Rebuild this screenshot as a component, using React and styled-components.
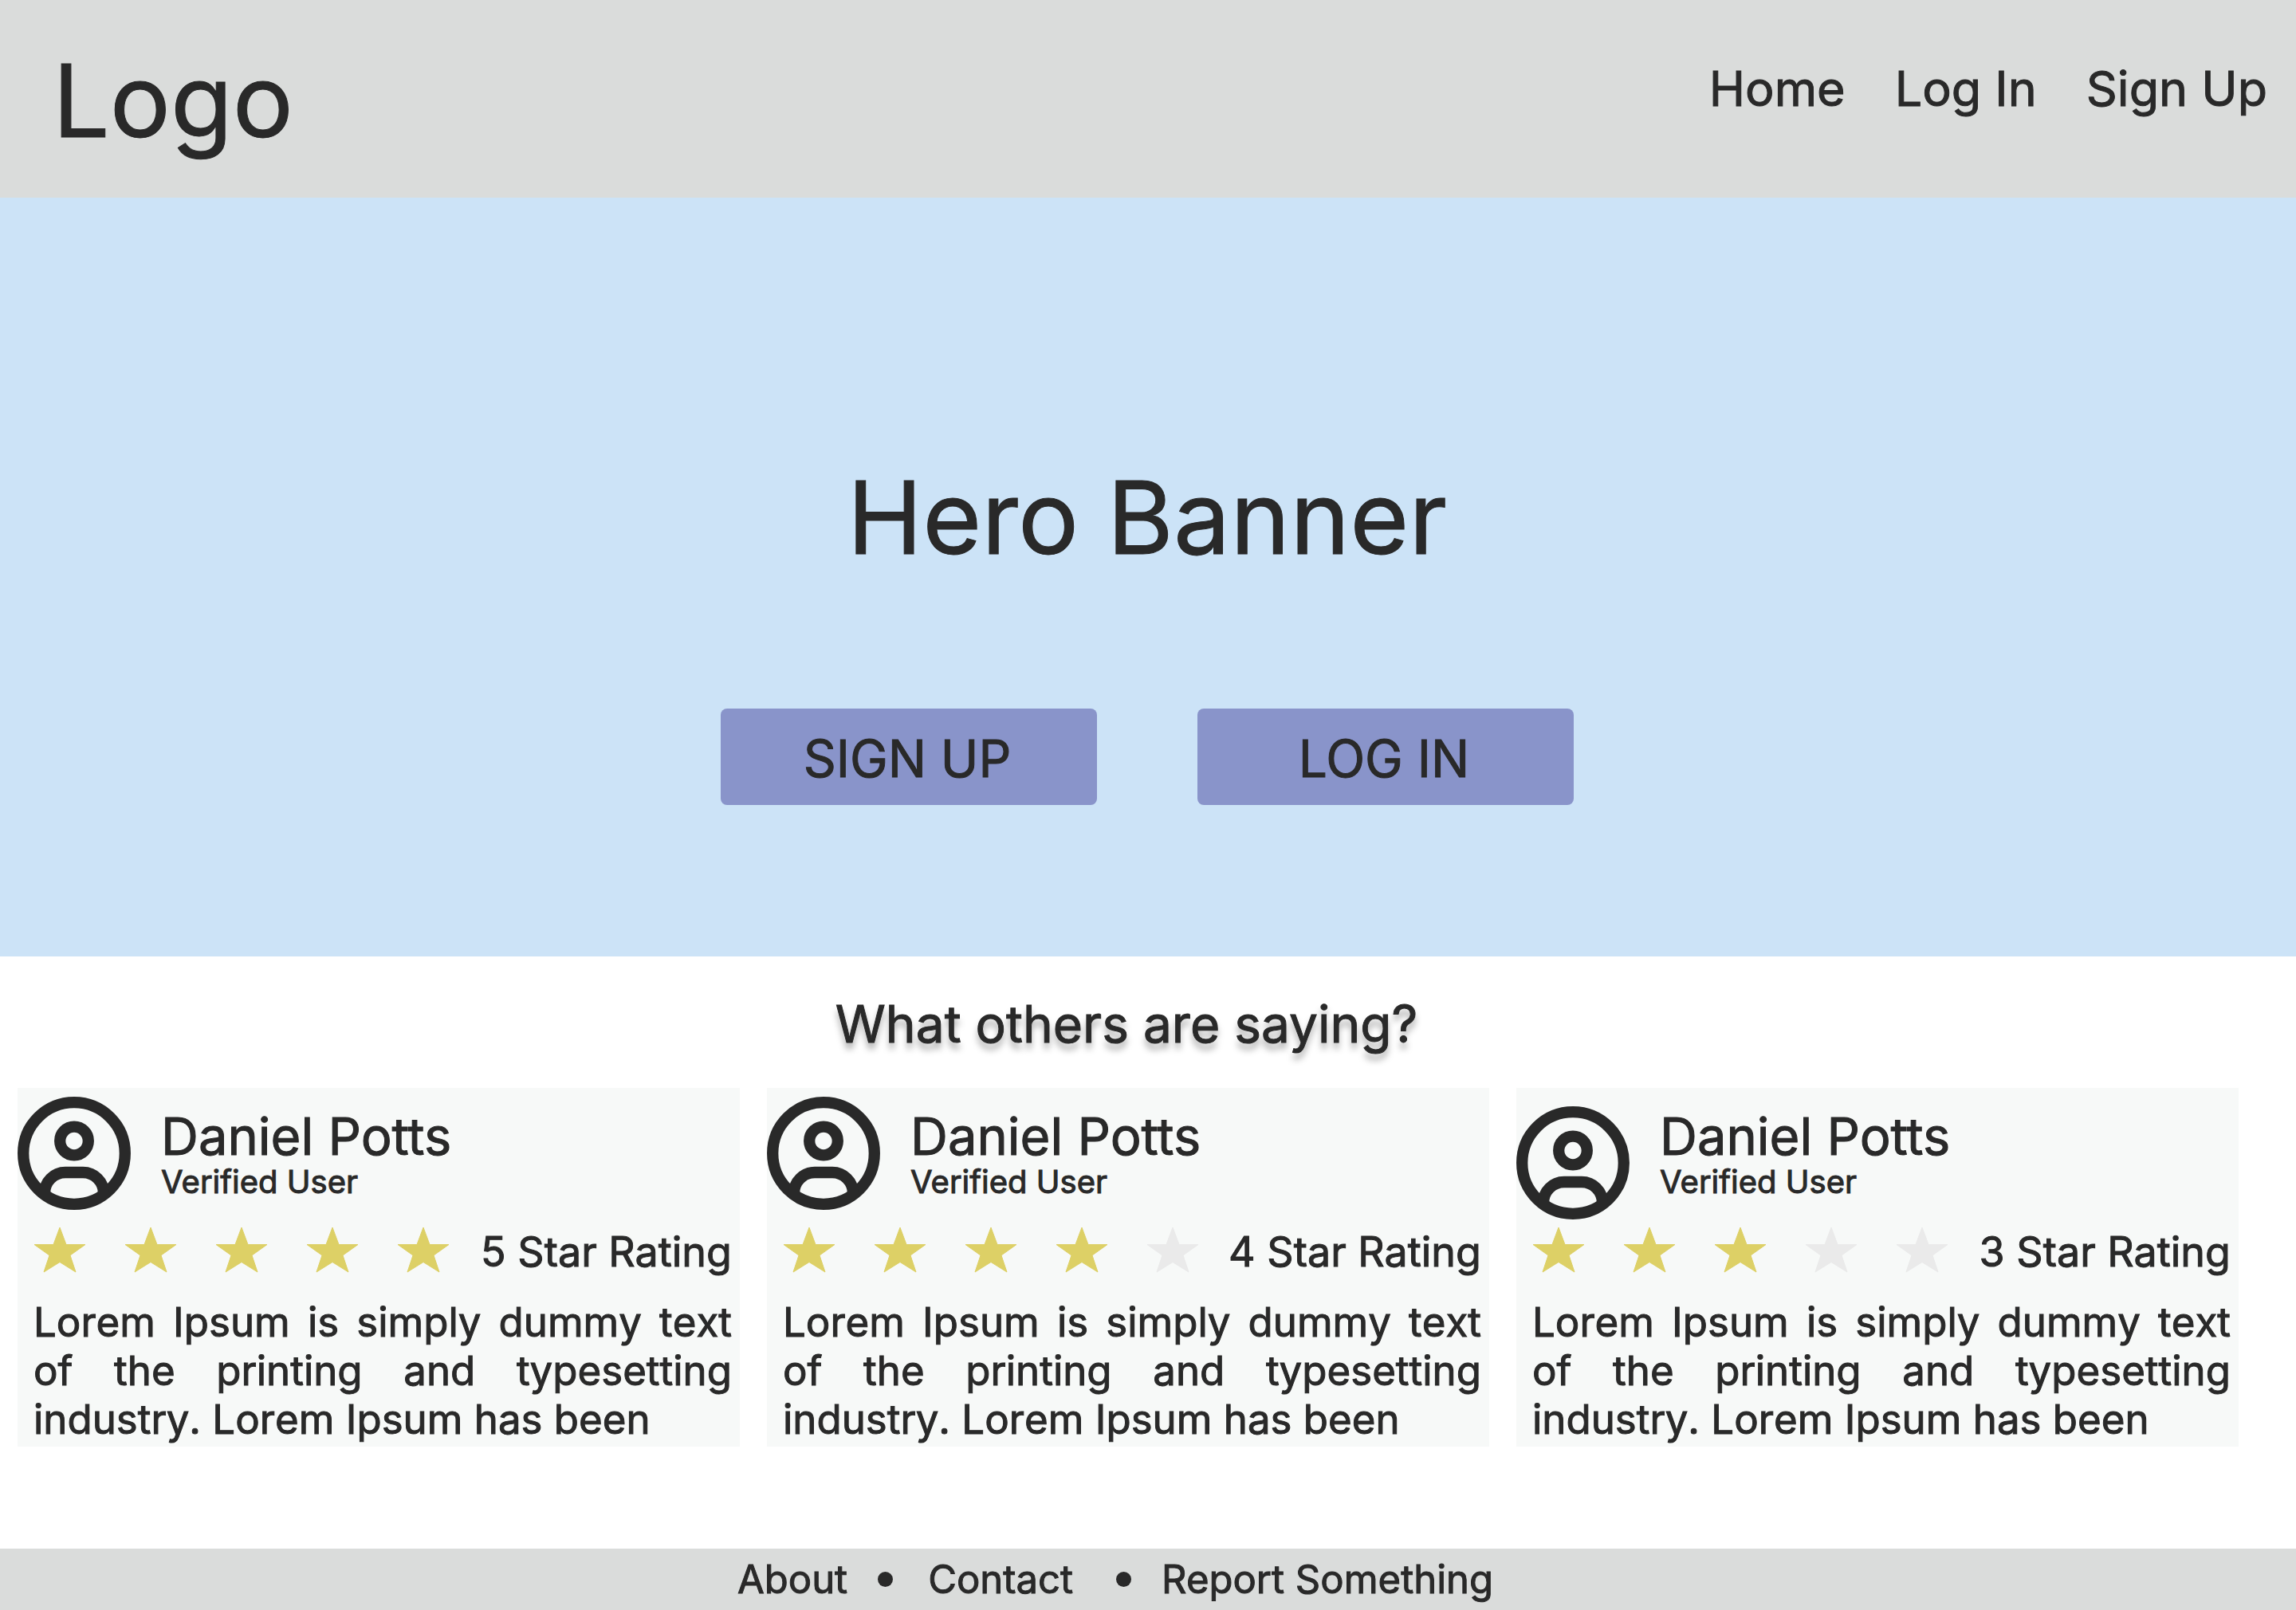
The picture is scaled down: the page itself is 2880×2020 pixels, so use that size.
import React from "react";
import styled, { createGlobalStyle } from "styled-components";

const ink = "#292929";

const GlobalStyle = createGlobalStyle`
  *, *::before, *::after { box-sizing: border-box; }
  body {
    margin: 0;
    background: #ffffff;
    color: ${ink};
    font-family: Inter, "Liberation Sans", sans-serif;
    -webkit-text-stroke: 1px ${ink};
  }
  h1, h2, h3, p { margin: 0; font-weight: 400; }
`;

const Page = styled.div`
  min-height: 100vh;
  display: flex;
  flex-direction: column;
`;

const Header = styled.header`
  display: flex;
  align-items: flex-start;
  justify-content: space-between;
  height: 248px;
  padding: 48px 36px 0 66px;
  background: #dadcdb;
`;

const Logo = styled.a`
  color: inherit;
  text-decoration: none;
  font-size: 127px;
  line-height: 156px;
`;

const Nav = styled.nav`
  display: flex;
  gap: 62px;
  padding-top: 24px;
`;

const NavLink = styled.a`
  color: inherit;
  text-decoration: none;
  font-size: 61px;
  line-height: 78px;
`;

const Hero = styled.section`
  display: flex;
  flex-direction: column;
  align-items: center;
  padding: 323px 2px 190px 0;
  background: #cce3f7;
`;

const HeroTitle = styled.h1`
  font-size: 127px;
  line-height: 156px;
`;

const Actions = styled.div`
  display: flex;
  gap: 126px;
  margin-top: 162px;
`;

const ActionButton = styled.button`
  width: 472px;
  height: 121px;
  padding: 4px 4px 0 0;
  border: 0;
  border-radius: 8px;
  background: #8994ca;
  color: inherit;
  font: inherit;
  font-size: 64px;
  line-height: 78px;
  -webkit-text-stroke: inherit;
`;

const Reviews = styled.section`
  flex: 1;
  padding: 46px 72px 80px 22px;
`;

const ReviewsTitle = styled.h2`
  padding-right: 4px;
  text-align: center;
  font-size: 64px;
  line-height: 78px;
  text-shadow: 0 8px 8px rgba(0, 0, 0, 0.35);
`;

const Cards = styled.div`
  display: grid;
  grid-template-columns: repeat(3, 1fr);
  gap: 34px;
  margin-top: 41px;
`;

const Card = styled.article`
  height: 450px;
  background: #f7f9f8;
`;

const Person = styled.div`
  display: flex;
  height: 175px;
`;

const Avatar = styled.svg`
  width: 142px;
  height: 142px;
  margin-top: ${(p) => (p.$low ? 23 : 11)}px;
`;

const Identity = styled.div`
  padding: 22px 0 0 38px;
`;

const Name = styled.h3`
  font-size: 65px;
  line-height: 78px;
`;

const Status = styled.p`
  font-size: 40px;
  line-height: 36px;
`;

const Rating = styled.div`
  display: flex;
  align-items: flex-start;
  justify-content: space-between;
  height: 60px;
  padding: 0 10px 0 21px;
`;

const Stars = styled.div`
  display: flex;
  gap: 50px;
`;

const Star = styled.svg`
  width: 64px;
  height: 56px;
  overflow: visible;
  fill: ${(p) => (p.$on ? "#ddd066" : "#eaeaea")};
  stroke: ${(p) => (p.$on ? "#ddd066" : "#eaeaea")};
`;

const Score = styled.span`
  font-size: 52px;
  line-height: 62px;
`;

const Quote = styled.p`
  padding: 28px 10px 0 20px;
  font-size: 51px;
  line-height: 61px;
  text-align: justify;
  font-kerning: none;
`;

const Footer = styled.footer`
  display: flex;
  justify-content: center;
  align-items: center;
  gap: 38px;
  height: 77px;
  padding-right: 82px;
  background: #dadcdb;
`;

const FooterLink = styled.a`
  padding: ${(p) => (p.$spaced ? "0 16px 0 6px" : 0)};
  color: inherit;
  text-decoration: none;
  font-size: 49px;
  line-height: 58px;
`;

const Dot = styled.span`
  width: 19px;
  height: 19px;
  border-radius: 50%;
  background: ${ink};
`;

const reviews = [
  { id: 1, stars: 5 },
  { id: 2, stars: 4 },
  { id: 3, stars: 3, low: true },
];

function UserIcon({ low }) {
  return (
    <Avatar $low={low} viewBox="0 0 142 142" fill="none" stroke={ink} strokeWidth="14.3" aria-hidden="true">
      <circle cx="71" cy="71" r="63.8" />
      <circle cx="71" cy="55.5" r="17.8" />
      <path d="M34 121A26 26 0 0 1 60 95H82A26 26 0 0 1 108 121" />
    </Avatar>
  );
}

function Review({ stars, low }) {
  return (
    <Card>
      <Person>
        <UserIcon low={low} />
        <Identity>
          <Name>Daniel Potts</Name>
          <Status>Verified User</Status>
        </Identity>
      </Person>
      <Rating>
        <Stars>
          {[1, 2, 3, 4, 5].map((n) => (
            <Star key={n} $on={n <= stars} viewBox="0 0 64 56" aria-hidden="true">
              <path d="M32 0L40 21.5H64L45 35L52 56L32 43.5L12 56L19 35L0 21.5H24Z" />
            </Star>
          ))}
        </Stars>
        <Score>{stars} Star Rating</Score>
      </Rating>
      <Quote>
        Lorem Ipsum is simply dummy text of the printing and typesetting industry. Lorem Ipsum has been
      </Quote>
    </Card>
  );
}

export default function App() {
  return (
    <Page>
      <GlobalStyle />
      <Header>
        <Logo href="#">Logo</Logo>
        <Nav>
          <NavLink href="#home">Home</NavLink>
          <NavLink href="#login">Log In</NavLink>
          <NavLink href="#signup">Sign Up</NavLink>
        </Nav>
      </Header>
      <Hero>
        <HeroTitle>Hero Banner</HeroTitle>
        <Actions>
          <ActionButton type="button">SIGN UP</ActionButton>
          <ActionButton type="button">LOG IN</ActionButton>
        </Actions>
      </Hero>
      <Reviews>
        <ReviewsTitle>What others are saying?</ReviewsTitle>
        <Cards>
          {reviews.map((r) => (
            <Review key={r.id} stars={r.stars} low={r.low} />
          ))}
        </Cards>
      </Reviews>
      <Footer>
        <FooterLink href="#about">About</FooterLink>
        <Dot />
        <FooterLink href="#contact" $spaced>Contact</FooterLink>
        <Dot />
        <FooterLink href="#report">Report Something</FooterLink>
      </Footer>
    </Page>
  );
}
